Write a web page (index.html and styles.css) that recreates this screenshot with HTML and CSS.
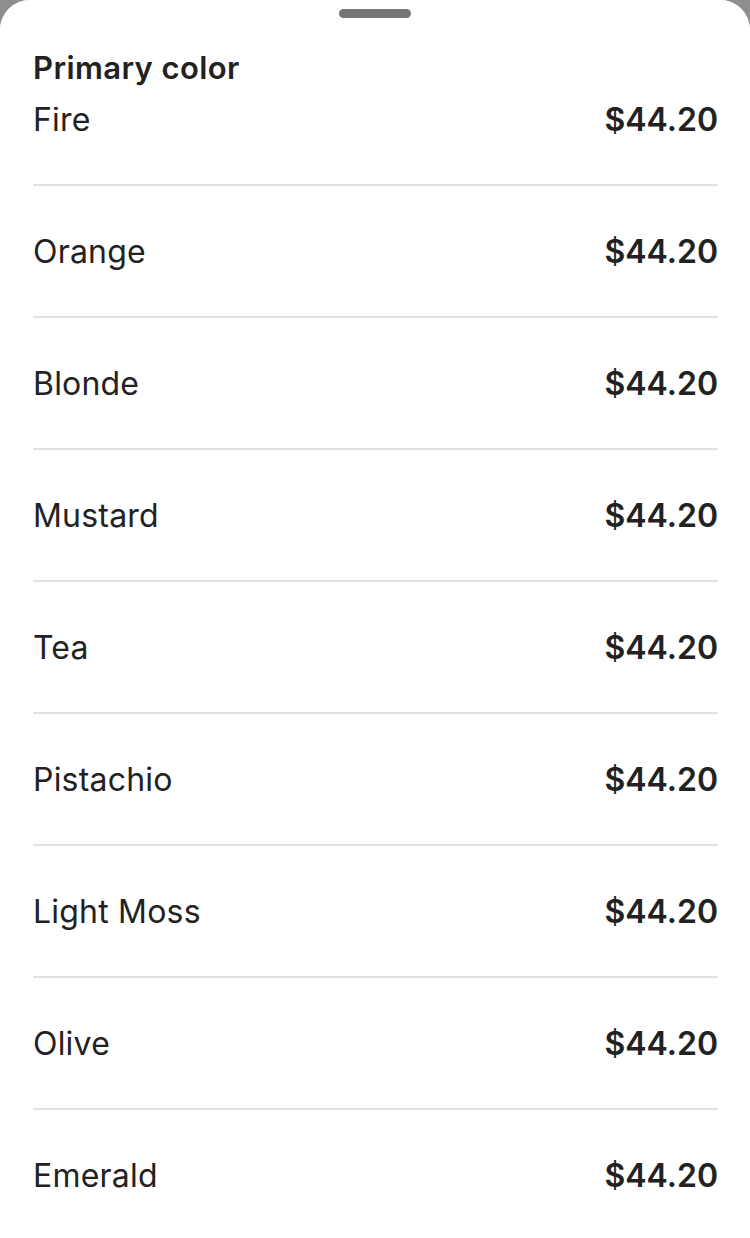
FILE: index.html
```html
<!DOCTYPE html>
<html>
<head>
<meta charset="utf-8">
<link rel="stylesheet" href="styles.css">
</head>
<body>
<div class="sheet">
  <div class="header">
    <div class="handle"></div>
    <h1 class="title">Primary color</h1>
  </div>
  <div class="viewport">
    <ul class="list">
      <li class="row"><span class="name">Fire</span><span class="price">$44.20</span></li>
      <li class="row"><span class="name">Orange</span><span class="price">$44.20</span></li>
      <li class="row"><span class="name">Blonde</span><span class="price">$44.20</span></li>
      <li class="row"><span class="name">Mustard</span><span class="price">$44.20</span></li>
      <li class="row"><span class="name">Tea</span><span class="price">$44.20</span></li>
      <li class="row"><span class="name">Pistachio</span><span class="price">$44.20</span></li>
      <li class="row"><span class="name">Light Moss</span><span class="price">$44.20</span></li>
      <li class="row"><span class="name">Olive</span><span class="price">$44.20</span></li>
      <li class="row"><span class="name">Emerald</span><span class="price">$44.20</span></li>
    </ul>
  </div>
</div>
</body>
</html>
```

FILE: styles.css
```css
* { box-sizing: border-box; }
html, body {
  margin: 0;
  padding: 0;
  height: 100%;
  background: #8e8e8e;
  font-family: Inter, "Noto Sans", sans-serif;
  color: #222222;
}
.sheet {
  height: 100vh;
  background: #ffffff;
  border-radius: 30px 30px 0 0;
  display: flex;
  flex-direction: column;
  overflow: hidden;
}
.header {
  height: 107px;
  flex: none;
  padding: 9px 33px 0;
  display: flex;
  flex-direction: column;
  align-items: stretch;
  background: #ffffff;
}
.handle {
  align-self: center;
  width: 72px;
  height: 9px;
  border-radius: 5px;
  background: #757575;
}
.title {
  margin: 32px 0 0;
  font-size: 31px;
  font-weight: 600;
  line-height: 36px;
  letter-spacing: 0.4px;
}
.viewport {
  flex: 1;
  overflow: hidden;
}
.list {
  list-style: none;
  margin: -53px 32px 0 33px;
  padding: 0;
}
.row {
  height: 132px;
  display: flex;
  align-items: center;
  justify-content: space-between;
  border-bottom: 2px solid #e1e1e1;
  font-size: 32px;
}
.name {
  font-weight: 400;
  letter-spacing: 0.2px;
}
.price {
  font-weight: 600;
}
```
